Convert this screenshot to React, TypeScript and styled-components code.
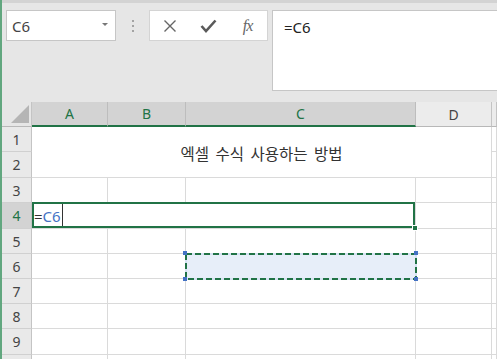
import React from "react";
import styled, { createGlobalStyle, css } from "styled-components";

const EXCEL_GREEN = "#217346";
const GRID_LINE = "#dadada";
const HEADER_LINE = "#c4c4c4";
const REF_BLUE = "#4472c4";

const GlobalStyle = createGlobalStyle`
  html, body {
    margin: 0;
    padding: 0;
    background: #ffffff;
  }
  body {
    font-family: "Noto Sans", "Noto Sans CJK KR", sans-serif;
    color: #333;
  }
`;

const Window = styled.div`
  width: 497px;
  height: 359px;
  overflow: hidden;
  display: flex;
  flex-direction: column;
  box-sizing: border-box;
  border-left: 2px solid #62a77f;
  background: #fff;
`;

/* ---------- formula bar ---------- */

const FormulaBar = styled.div`
  flex: none;
  height: 102px;
  box-sizing: border-box;
  display: flex;
  align-items: flex-start;
  padding: 7px 0 0 4px;
  background: #e6e6e6;
  border-top: 3px solid #d3d3d3;
`;

const NameBox = styled.div`
  width: 110px;
  height: 31px;
  box-sizing: border-box;
  display: flex;
  align-items: center;
  justify-content: space-between;
  padding: 0 7px 0 5px;
  background: #fff;
  border: 1px solid #c6c6c6;
  font-size: 15px;
  color: #444;
`;

const DropArrow = styled.span`
  width: 0;
  height: 0;
  border-left: 3px solid transparent;
  border-right: 3px solid transparent;
  border-top: 3px solid #777;
  margin-bottom: 2px;
`;

const Grip = styled.div`
  width: 33px;
  height: 31px;
  display: flex;
  flex-direction: column;
  align-items: center;
  justify-content: center;
  gap: 3px;

  & span {
    width: 2px;
    height: 2px;
    background: #a3a3a3;
  }
`;

const FuncBox = styled.div`
  width: 119px;
  height: 31px;
  box-sizing: border-box;
  display: grid;
  grid-template-columns: repeat(3, 1fr);
  align-items: center;
  justify-items: center;
  background: #fff;
  border: 1px solid #d4d4d4;
`;

const FxText = styled.span`
  font-family: "Liberation Serif", "DejaVu Serif", serif;
  font-style: italic;
  font-size: 16px;
  color: #666;
  letter-spacing: -1px;
`;

const FormulaInput = styled.div`
  flex: 1;
  height: 81px;
  margin-left: 4px;
  box-sizing: border-box;
  padding: 5px 11px;
  background: #fff;
  border: 1px solid #c6c6c6;
  border-right: none;
  font-size: 15px;
  line-height: 22px;
  color: #222;
`;

/* ---------- sheet ---------- */

const Sheet = styled.div`
  flex: 1;
  display: grid;
  grid-template-columns: 30px 76px 78px 230px 76px 1fr;
  grid-template-rows: 25px 25px 26px 25px 26px 25px 25px 25px 25px 26px 1fr;
  background: #fff;
`;

const Corner = styled.div`
  position: relative;
  background: #e6e6e6;
  border-right: 1px solid ${HEADER_LINE};
  border-bottom: 1px solid #b8b8b8;
`;

const ColHeader = styled.div<{ $selected?: boolean }>`
  display: flex;
  align-items: center;
  justify-content: center;
  box-sizing: border-box;
  font-size: 14px;
  background: #ececec;
  color: #444;
  border-right: 1px solid ${HEADER_LINE};
  border-bottom: 1px solid #b8b8b8;

  ${({ $selected }) =>
    $selected &&
    css`
      background: #d3d3d3;
      color: ${EXCEL_GREEN};
      border-bottom: 2px solid ${EXCEL_GREEN};
      border-right-color: #bdbdbd;
    `}
`;

const RowHeader = styled.div<{ $selected?: boolean }>`
  display: flex;
  align-items: center;
  justify-content: center;
  box-sizing: border-box;
  font-size: 14px;
  background: #e9e9e9;
  color: #444;
  border-right: 1px solid ${HEADER_LINE};
  border-bottom: 1px solid #d0d0d0;

  ${({ $selected }) =>
    $selected &&
    css`
      background: #d3d3d3;
      color: ${EXCEL_GREEN};
    `}
`;

const Cell = styled.div`
  box-sizing: border-box;
  border-right: 1px solid ${GRID_LINE};
  border-bottom: 1px solid ${GRID_LINE};
`;

const TitleCell = styled(Cell)`
  grid-column: span 4;
  grid-row: span 2;
  display: flex;
  align-items: center;
  justify-content: center;
  font-family: "Noto Sans CJK KR", "Noto Sans", sans-serif;
  font-size: 15.5px;
  word-spacing: 3px;
  color: #333;
  padding-top: 2px;
`;

const EditCell = styled(Cell)`
  grid-column: span 3;
  position: relative;
  z-index: 2;
  display: flex;
  align-items: center;
  padding-left: 2px;
  font-size: 15px;
  color: #333;

  &::after {
    content: "";
    position: absolute;
    top: -1px;
    left: 0;
    right: 0;
    bottom: 0;
    border: 2px solid ${EXCEL_GREEN};
    pointer-events: none;
  }
`;

const FillHandle = styled.span`
  position: absolute;
  right: -3px;
  bottom: -3px;
  width: 4px;
  height: 4px;
  background: ${EXCEL_GREEN};
  border: 1px solid #fff;
  z-index: 3;
`;

const RefText = styled.span`
  color: ${REF_BLUE};
`;

const Caret = styled.span`
  width: 1px;
  height: 23px;
  margin-left: 1px;
  background: #333;
`;

const RefCell = styled(Cell)`
  position: relative;
  z-index: 2;
  background: #e7eef9;
`;

const MarchingAnts = styled.svg`
  position: absolute;
  left: -1px;
  top: -1px;
  overflow: visible;
`;

const Handle = styled.span<{ $x: "left" | "right"; $y: "top" | "bottom" }>`
  position: absolute;
  width: 4px;
  height: 4px;
  background: ${REF_BLUE};
  ${({ $x }) => ($x === "left" ? "left: -3px;" : "right: -3px;")}
  ${({ $y }) => ($y === "top" ? "top: -3px;" : "bottom: -3px;")}
`;

const columns = ["A", "B", "C", "D", ""];

function CloseIcon() {
  return (
    <svg width="14" height="14" viewBox="0 0 14 14">
      <path d="M1.5 1.5 L12.5 12.5 M12.5 1.5 L1.5 12.5" stroke="#666" strokeWidth="1.4" fill="none" />
    </svg>
  );
}

function CheckIcon() {
  return (
    <svg width="17" height="14" viewBox="0 0 17 14">
      <path d="M1.5 7 L6 12 L15.5 1.5" stroke="#5a5a5a" strokeWidth="2.6" fill="none" strokeLinejoin="miter" />
    </svg>
  );
}

function PlainRow({ n, refC }: { n: number; refC?: boolean }) {
  return (
    <>
      <RowHeader>{n}</RowHeader>
      <Cell />
      <Cell />
      {refC ? (
        <RefCell>
          <MarchingAnts width="232" height="27">
            <rect x="1" y="1" width="230" height="25" fill="none" stroke="#d6e2f3" strokeWidth="2" />
            <rect x="1" y="1" width="230" height="25" fill="none" stroke={EXCEL_GREEN} strokeWidth="2" strokeDasharray="6 3" />
          </MarchingAnts>
          <Handle $x="left" $y="top" />
          <Handle $x="right" $y="top" />
          <Handle $x="left" $y="bottom" />
          <Handle $x="right" $y="bottom" />
        </RefCell>
      ) : (
        <Cell />
      )}
      <Cell />
      <Cell />
    </>
  );
}

export default function App() {
  return (
    <>
      <GlobalStyle />
      <Window>
        <FormulaBar>
          <NameBox>
            C6
            <DropArrow />
          </NameBox>
          <Grip>
            <span />
            <span />
            <span />
          </Grip>
          <FuncBox>
            <CloseIcon />
            <CheckIcon />
            <FxText>fx</FxText>
          </FuncBox>
          <FormulaInput>=C6</FormulaInput>
        </FormulaBar>

        <Sheet>
          <Corner>
            <svg width="30" height="25" style={{ position: "absolute", left: 0, top: 0 }}>
              <polygon points="27,3 27,21 9,21" fill="#b5b5b5" />
            </svg>
          </Corner>
          {columns.map((c, i) => (
            <ColHeader key={i} $selected={i < 3}>
              {c}
            </ColHeader>
          ))}

          <RowHeader>1</RowHeader>
          <TitleCell>엑셀 수식 사용하는 방법</TitleCell>
          <Cell />
          <RowHeader>2</RowHeader>
          <Cell />

          <PlainRow n={3} />

          <RowHeader $selected>4</RowHeader>
          <EditCell>
            =<RefText>C6</RefText>
            <Caret />
            <FillHandle />
          </EditCell>
          <Cell />
          <Cell />

          <PlainRow n={5} />
          <PlainRow n={6} refC />
          <PlainRow n={7} />
          <PlainRow n={8} />
          <PlainRow n={9} />
          <PlainRow n={10} />
        </Sheet>
      </Window>
    </>
  );
}
